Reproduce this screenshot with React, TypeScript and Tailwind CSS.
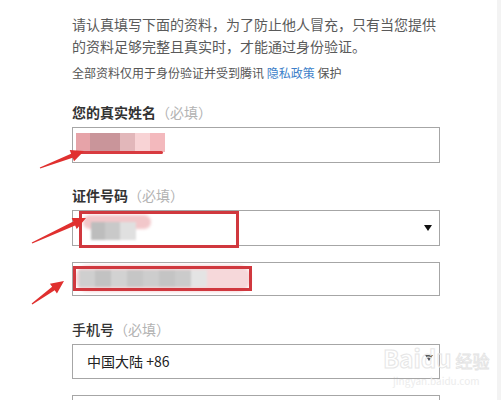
import React from "react";

const font = { fontFamily: '"Noto Sans CJK SC", "Noto Sans", "Liberation Sans", sans-serif' };

function arrowPoints(x1: number, y1: number, x2: number, y2: number) {
  const dx = x2 - x1;
  const dy = y2 - y1;
  const len = Math.hypot(dx, dy);
  const ux = dx / len;
  const uy = dy / len;
  const nx = -uy;
  const ny = ux;
  const hl = 13;
  const hw = 6;
  const sw = 2.2;
  const bx = x2 - ux * hl;
  const by = y2 - uy * hl;
  const pts = [
    [x1 + nx * 0.6, y1 + ny * 0.6],
    [bx + nx * sw, by + ny * sw],
    [bx + nx * hw, by + ny * hw],
    [x2, y2],
    [bx - nx * hw, by - ny * hw],
    [bx - nx * sw, by - ny * sw],
    [x1 - nx * 0.6, y1 - ny * 0.6],
  ];
  return pts.map((p) => p.join(",")).join(" ");
}

function Caret() {
  return (
    <svg width="8" height="6" viewBox="0 0 8 6" className="shrink-0">
      <path d="M0 0 H8 L4 6 Z" fill="#111" />
    </svg>
  );
}

function Label({ text, bold = true }: { text: string; bold?: boolean }) {
  return (
    <div className={`text-[14px] leading-[20px] text-[#333] ${bold ? "font-bold" : "font-medium"}`}>
      {text}
      <span className="font-normal text-[#b3b3b3]">（必填）</span>
    </div>
  );
}

export default function App() {
  return (
    <div className="relative w-[501px] h-[400px] overflow-hidden bg-white flex" style={font}>
      <div className="w-[497px] pl-[72px] pt-[13px]">
        <div className="w-[368px] flex flex-col">
          <p className="text-[14px] leading-[22px] text-[#5a5a5a] whitespace-nowrap">
            请认真填写下面的资料，为了防止他人冒充，只有当您提供
            <br />
            的资料足够完整且真实时，才能通过身份验证。
          </p>
          <p className="mt-[6px] text-[12px] leading-[20px] text-[#555]">
            全部资料仅用于身份验证并受到腾讯 <span className="text-[#3d7fc9]">隐私政策</span> 保护
          </p>

          <div className="mt-[19px]">
            <Label text="您的真实姓名" />
          </div>
          <div className="relative mt-[5px] h-[36px] border border-[#a6a6a6] bg-white">
            <div className="absolute left-[3px] top-[5px] flex h-[19px] blur-[0.6px]">
              <div className="w-[14px] bg-[#e6a3a8]" />
              <div className="w-[30px] bg-[#c9959a]" />
              <div className="w-[15px] bg-[#e2b7ba]" />
              <div className="w-[15px] bg-[#f8d3d5]" />
              <div className="w-[15px] bg-[#f3b9bd]" />
            </div>
            <div className="absolute left-[6px] top-[23px] w-[84px] h-[3px] bg-[#d83b40] rounded-full" />
          </div>

          <div className="mt-[22px]">
            <Label text="证件号码" />
          </div>
          <div className="relative mt-[5px] h-[36px] border border-[#a6a6a6] bg-white flex items-center justify-end pr-[7px]">
            <div className="absolute left-[10px] top-[4px] w-[68px] h-[14px] rounded-full bg-[#f2c7ca] blur-[1.5px]" />
            <div className="absolute left-[18px] top-[11px] flex h-[18px] blur-[0.8px]">
              <div className="w-[14px] bg-[#bdbdbd]" />
              <div className="w-[15px] bg-[#c9c9c9]" />
              <div className="w-[16px] bg-[#e0e0e0]" />
            </div>
            <div className="absolute left-[6px] top-[0px] w-[160px] h-[37px] border-[3px] border-[#d0383e]" />
            <Caret />
          </div>

          <div className="relative mt-[16px] h-[34px] border border-[#a6a6a6] bg-white">
            <div className="absolute left-[2px] top-[2px] w-[176px] h-[27px] rounded-full bg-[#f6d8da] blur-[1.5px]" />
            <div className="absolute left-[6px] top-[7px] flex h-[17px] blur-[0.8px]">
              <div className="w-[16px] bg-[#cfcfcf]" />
              <div className="w-[16px] bg-[#c2c2c2]" />
              <div className="w-[16px] bg-[#d2d2d2]" />
              <div className="w-[16px] bg-[#c6c6c6]" />
              <div className="w-[16px] bg-[#cdcdcd]" />
              <div className="w-[16px] bg-[#c4c4c4]" />
              <div className="w-[16px] bg-[#cbcbcb]" />
              <div className="w-[16px] bg-[#e4e4e4]" />
            </div>
            <div className="absolute left-[86px] top-[21px] text-[10px] leading-[10px] text-[#222]">- - -</div>
            <div className="absolute left-[0px] top-[3px] w-[179px] h-[25px] border-[3px] border-[#d0383e]" />
          </div>

          <div className="mt-[23px]">
            <Label text="手机号" bold={false} />
          </div>
          <div className="mt-[5px] h-[35px] border border-[#a6a6a6] bg-white flex items-center justify-between pl-[14px] pr-[6px]">
            <span className="text-[14px] text-[#222]">中国大陆 +86</span>
            <div className="-mt-[8px] opacity-70">
              <Caret />
            </div>
          </div>

          <div className="mt-[16px] h-[36px] border border-[#a6a6a6] bg-white" />
        </div>
      </div>
      <div className="flex-1 bg-[#f3f3f3]" />

      {/* watermark */}
      <div className="absolute left-[383px] top-[344px] flex flex-col items-center pointer-events-none">
        <div className="flex items-baseline gap-[4px]">
          <span className="text-[24px] leading-[28px] font-bold text-transparent" style={{ WebkitTextStroke: "1px #e6e6e6" }}>
            Baidu
          </span>
          <span className="text-[17px] leading-[28px] text-transparent" style={{ WebkitTextStroke: "0.8px #e3e3e3" }}>
            经验
          </span>
        </div>
        <span className="text-[10px] leading-[12px] text-[#ececec]">jingyan.baidu.com</span>
      </div>

      {/* annotation arrows */}
      <svg className="absolute inset-0 pointer-events-none" width="501" height="400">
        <polygon points={arrowPoints(40, 168, 84, 151)} fill="#e0302f" />
        <polygon points={arrowPoints(32, 243, 86, 218)} fill="#e0302f" />
        <polygon points={arrowPoints(32, 304, 64, 281)} fill="#e0302f" />
      </svg>
    </div>
  );
}
